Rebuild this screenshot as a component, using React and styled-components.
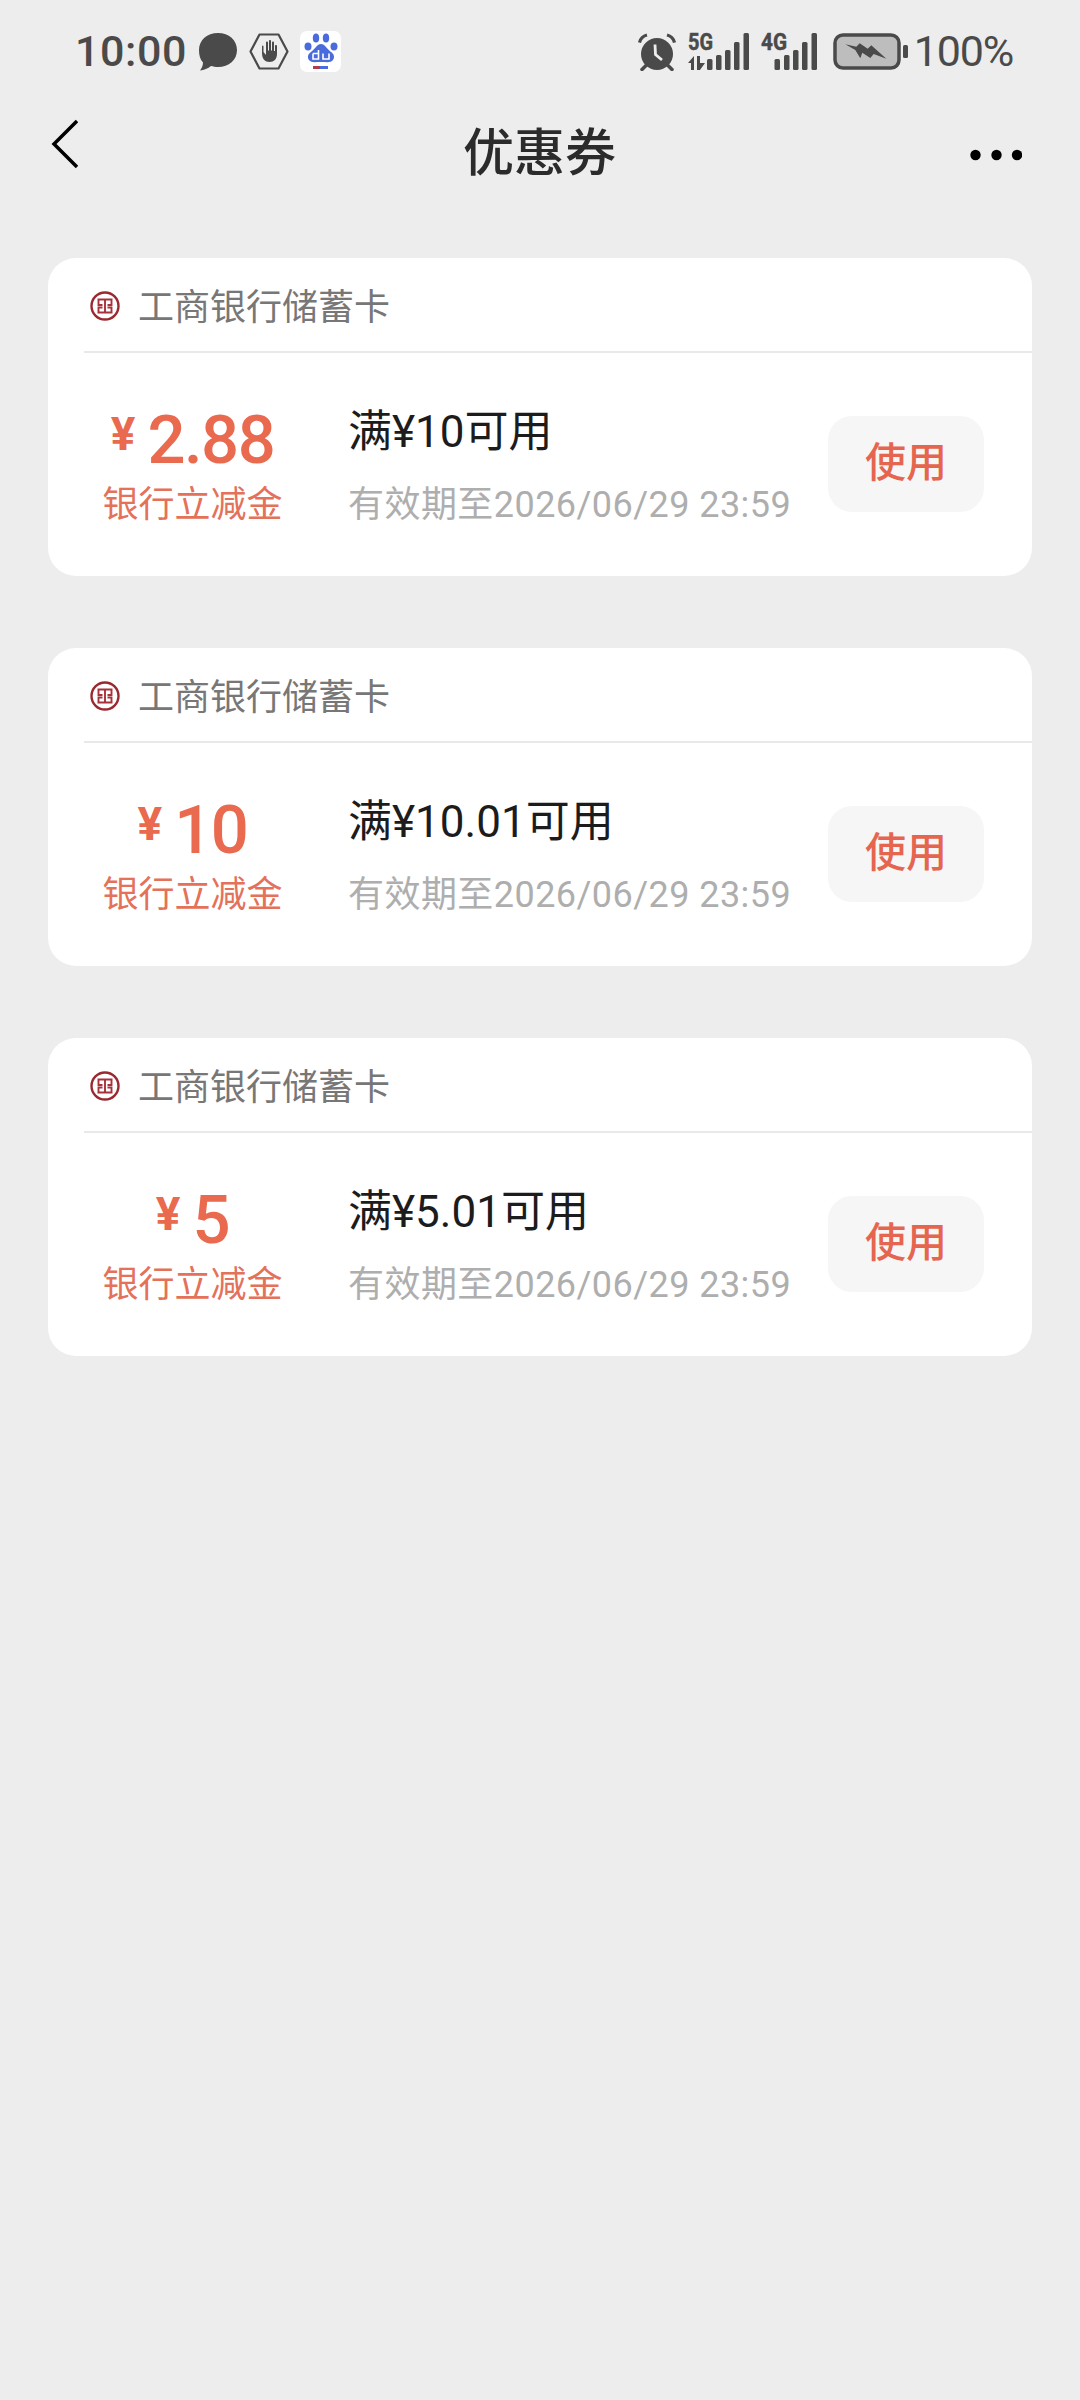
import React from "react";
import styled, { createGlobalStyle } from "styled-components";

const Global = createGlobalStyle`
  html, body { margin: 0; padding: 0; background: #ededed; }
  * { box-sizing: border-box; }
`;
const FONT = `Roboto, "Noto Sans CJK SC", sans-serif`;

const Page = styled.div`
  width: 1080px; height: 2400px; background: #ededed; overflow: hidden; font-family: ${FONT};
`;
const StatusBar = styled.div`
  height: 100px; padding: 31px 67px 0 75px; display: flex; justify-content: space-between; align-items: flex-start; color: #4a4a4a;
`;
const StatusGroup = styled.div`
  display: flex; align-items: center; height: 41px;
  gap: ${p => p.$gap}px;
`;
const TimeText = styled.span`
  font-size: 43px; font-weight: 500; line-height: 41px; letter-spacing: 0.6px;
`;
const BatteryText = styled.span`
  font-size: 43px; font-weight: 400; line-height: 41px; letter-spacing: -1.2px; margin-left: -5px;
`;
const Tile = styled.div`
  width: 41px; height: 41px; background: #fff; border-radius: 7px; display: flex; align-items: center; justify-content: center;
`;
const Nav = styled.div`
  height: 104px; display: grid; grid-template-columns: 1fr auto 1fr; align-items: center; padding: 0 58px 0 51px;
`;
const Title = styled.h1`
  margin: 4px 0 0 6px; font-size: 51px; font-weight: 500; color: #2b2b2b; line-height: 100px;
`;
const Back = styled.svg`
  display: block; margin-top: -17px;
`;
const More = styled.svg`
  display: block; justify-self: end; margin-top: 6px;
`;
const List = styled.div`
  padding: 54px 48px 0; display: flex; flex-direction: column; gap: 72px;
`;
const Card = styled.div`
  height: 318px; background: #fff; border-radius: 28px; overflow: hidden;
`;
const CardHead = styled.div`
  height: 95px; margin-left: 36px; padding: 2px 0 0 3px; border-bottom: 2px solid #e9e9e9; display: flex; align-items: center; gap: 15px;
`;
const BankName = styled.span`
  font-size: 36px; color: #777; line-height: 1; margin-top: 4px;
`;
const CardBody = styled.div`
  height: 223px; padding: 0 48px 0 48px; display: flex; align-items: center;
`;
const AmountCol = styled.div`
  width: 193px; display: flex; flex-direction: column; align-items: center; flex-shrink: 0;
`;
const Amount = styled.div`
  display: flex; align-items: flex-start; justify-content: center; gap: 12px; color: #e96a4e; height: 72px;
`;
const Yen = styled.span`
  font-size: 46px; font-weight: 700; line-height: 60px;
`;
const Value = styled.span`
  font-size: 67px; font-weight: 500; line-height: 72px; letter-spacing: -1.5px;
`;
const Caption = styled.div`
  font-size: 36px; color: #e4715a; line-height: 40px; margin-top: 9px; white-space: nowrap;
`;
const Info = styled.div`
  margin-left: 59px; flex: 1; display: flex; flex-direction: column;
`;
const Rule = styled.div`
  font-size: 44px; color: #1c1c1c; line-height: 50px; margin-top: 3px;
`;
const Expire = styled.div`
  font-size: 36px; color: #aeaeae; line-height: 40px; margin-top: 28px; white-space: nowrap; letter-spacing: 0.45px;
`;
const UseButton = styled.button`
  width: 156px; height: 96px; border: 0; border-radius: 24px; background: #f6f6f6; color: #e5654e; font-family: ${FONT}; font-size: 41px; font-weight: 500; padding: 0 0 9px; margin-top: -2px; flex-shrink: 0;
`;

const Ink = "#4a4a4a";

const Bubble = () => (
  <svg width="40" height="38" viewBox="0 0 40 38">
    <path d="M20 0C31 0 39 7 39 17C39 27 31 34 20 34C17.500 34 15 33.500 13 33C10 35.500 6 37 2 37.500C4 35 5 32 5 29.500C2 26.500 1 22 1 17C1 7 9 0 20 0Z" fill={Ink} />
  </svg>
);
const Hand = () => (
  <svg width="40" height="37" viewBox="0 0 40 37">
    <path d="M10.500 1.500H29.500L38.500 18.500L29.500 35.500H10.500L1.500 18.500Z" fill="none" stroke={Ink} strokeWidth="2.200" strokeLinejoin="round" />
    <path d="M13 13.500V20C13 26 16 29 20.500 29C25 29 28 26 28 21V13C28 11.600 26 11.600 26 13V18H25V9.500C25 8 23 8 23 9.500V17.500H22V8C22 6.600 20 6.600 20 8V17.500H19V9.500C19 8 17 8 17 9.500V22L14.500 19V13.500C14.500 12.300 13 12.300 13 13.500Z" fill={Ink} />
  </svg>
);
const Paw = () => (
  <svg width="34" height="37" viewBox="0 0 34 37">
    <g fill="#4a6bdc">
      <ellipse cx="4" cy="13.500" rx="3.500" ry="4" />
      <ellipse cx="12" cy="5" rx="3.200" ry="4.500" />
      <ellipse cx="22" cy="5" rx="3.200" ry="4.500" />
      <ellipse cx="30" cy="13.500" rx="3.500" ry="4" />
      <path d="M17 11C21 11 23 16 27 19C30 21 31 24 29 27C27 30 23 29 17 29C11 29 7 30 5 27C3 24 4 21 7 19C11 16 13 11 17 11Z" />
    </g>
    <path d="M9 20.500H14.500V26H9V20.500M14.500 17V26M19 20.500V26H25V20.500" fill="none" stroke="#fff" strokeWidth="1.600" />
    <rect x="9" y="33" width="7" height="3" fill="#b33a4a" />
    <rect x="16" y="33" width="8" height="3" fill="#4a6bdc" />
  </svg>
);
const Alarm = () => (
  <svg width="38" height="38" viewBox="0 0 38 38">
    <circle cx="19" cy="21" r="16" fill={Ink} />
    <path d="M1.500 9.500C2.500 5.500 5 3 9 2M36.500 9.500C35.500 5.500 33 3 29 2" fill="none" stroke={Ink} strokeWidth="3.200" />
    <path d="M4 36.500L8 32.500M34 36.500L30 32.500" stroke={Ink} strokeWidth="3.500" strokeLinecap="round" />
    <path d="M17 11.500L17.500 21.500L24 27" fill="none" stroke="#ededed" strokeWidth="2.800" />
  </svg>
);
const bar = (x, top, w = 5.500) => <rect key={x} x={x} y={top} width={w} height={37 - top} rx="1.500" fill={Ink} />;
const Sig5G = () => (
  <svg width="63" height="50" viewBox="0 -6 63 50">
    <text x="1" y="17" fontFamily="Roboto" fontWeight="700" fontSize="24" textLength="25" lengthAdjust="spacingAndGlyphs" fill={Ink} stroke={Ink} strokeWidth="0.500">5G</text>
    <path d="M1 30L7 23V37H4V30ZM10 23H13V30H18L13 37H10Z" fill={Ink} />
    {[[20, 26], [29, 22], [38, 17], [47, 9], [56.500, 0]].map(([x, t]) => bar(x, t))}
  </svg>
);
const Sig4G = () => (
  <svg width="57" height="50" viewBox="0 -6 57 50">
    <text x="0" y="17" fontFamily="Roboto" fontWeight="700" fontSize="24" textLength="26" lengthAdjust="spacingAndGlyphs" fill={Ink} stroke={Ink} strokeWidth="0.500">4G</text>
    {[[13.500, 26], [23, 22], [32, 17], [41, 9], [50.500, 0]].map(([x, t]) => bar(x, t))}
  </svg>
);
const Battery = () => (
  <svg width="79" height="38" viewBox="-4 0 79 38">
    <rect x="2" y="2" width="64" height="33" rx="8" fill="#bdbdbd" stroke={Ink} strokeWidth="3.500" />
    <rect x="70" y="12" width="5" height="13" rx="1.500" fill={Ink} />
    <path d="M12.300 11.300L23.300 13.700L26.700 10.300L34.700 15.700L38.300 12.300L53.300 25.700L40.700 21L37.300 25L29.300 19.700L27.300 25.300L22.300 17Z" fill={Ink} />
  </svg>
);
const Icbc = () => (
  <svg width="36" height="36" viewBox="0 0 36 36">
    <circle cx="18" cy="18" r="13.500" fill="#fff" stroke="#9a2a30" strokeWidth="2.400" />
    <path d="M10.500 11.500H25.500M10.500 24.500H25.500M18 11.500V24.500M11.500 11.500V17H15.500M24.500 11.500V17H20.500M11.500 24.500V19.500H15.500M24.500 24.500V19.500H20.500" fill="none" stroke="#a8323a" strokeWidth="1.900" />
  </svg>
);

const coupons = [
  { value: "2.88", rule: "满¥10可用" },
  { value: "10", rule: "满¥10.01可用" },
  { value: "5", rule: "满¥5.01可用" },
];

export default function App() {
  return (
    <Page>
      <Global />
      <StatusBar>
        <StatusGroup $gap={11}>
          <TimeText>10:00</TimeText>
          <Bubble />
          <Hand />
          <Tile><Paw /></Tile>
        </StatusGroup>
        <StatusGroup $gap={11}>
          <Alarm />
          <Sig5G />
          <Sig4G />
          <Battery />
          <BatteryText>100%</BatteryText>
        </StatusGroup>
      </StatusBar>
      <Nav>
        <Back width="27" height="50" viewBox="0 0 27 50">
          <path d="M26 2L3 25L26 48" fill="none" stroke="#000" strokeWidth="3.500" />
        </Back>
        <Title>优惠券</Title>
        <More width="52" height="12" viewBox="0 0 52 12">
          <circle cx="5.500" cy="6" r="5.200" fill="#000" />
          <circle cx="26.500" cy="6" r="5.200" fill="#000" />
          <circle cx="47" cy="6" r="5.200" fill="#000" />
        </More>
      </Nav>
      <List>
        {coupons.map(c => (
          <Card key={c.rule}>
            <CardHead>
              <Icbc />
              <BankName>工商银行储蓄卡</BankName>
            </CardHead>
            <CardBody>
              <AmountCol>
                <Amount>
                  <Yen>¥</Yen>
                  <Value>{c.value}</Value>
                </Amount>
                <Caption>银行立减金</Caption>
              </AmountCol>
              <Info>
                <Rule>{c.rule}</Rule>
                <Expire>有效期至2026/06/29 23:59</Expire>
              </Info>
              <UseButton>使用</UseButton>
            </CardBody>
          </Card>
        ))}
      </List>
    </Page>
  );
}
